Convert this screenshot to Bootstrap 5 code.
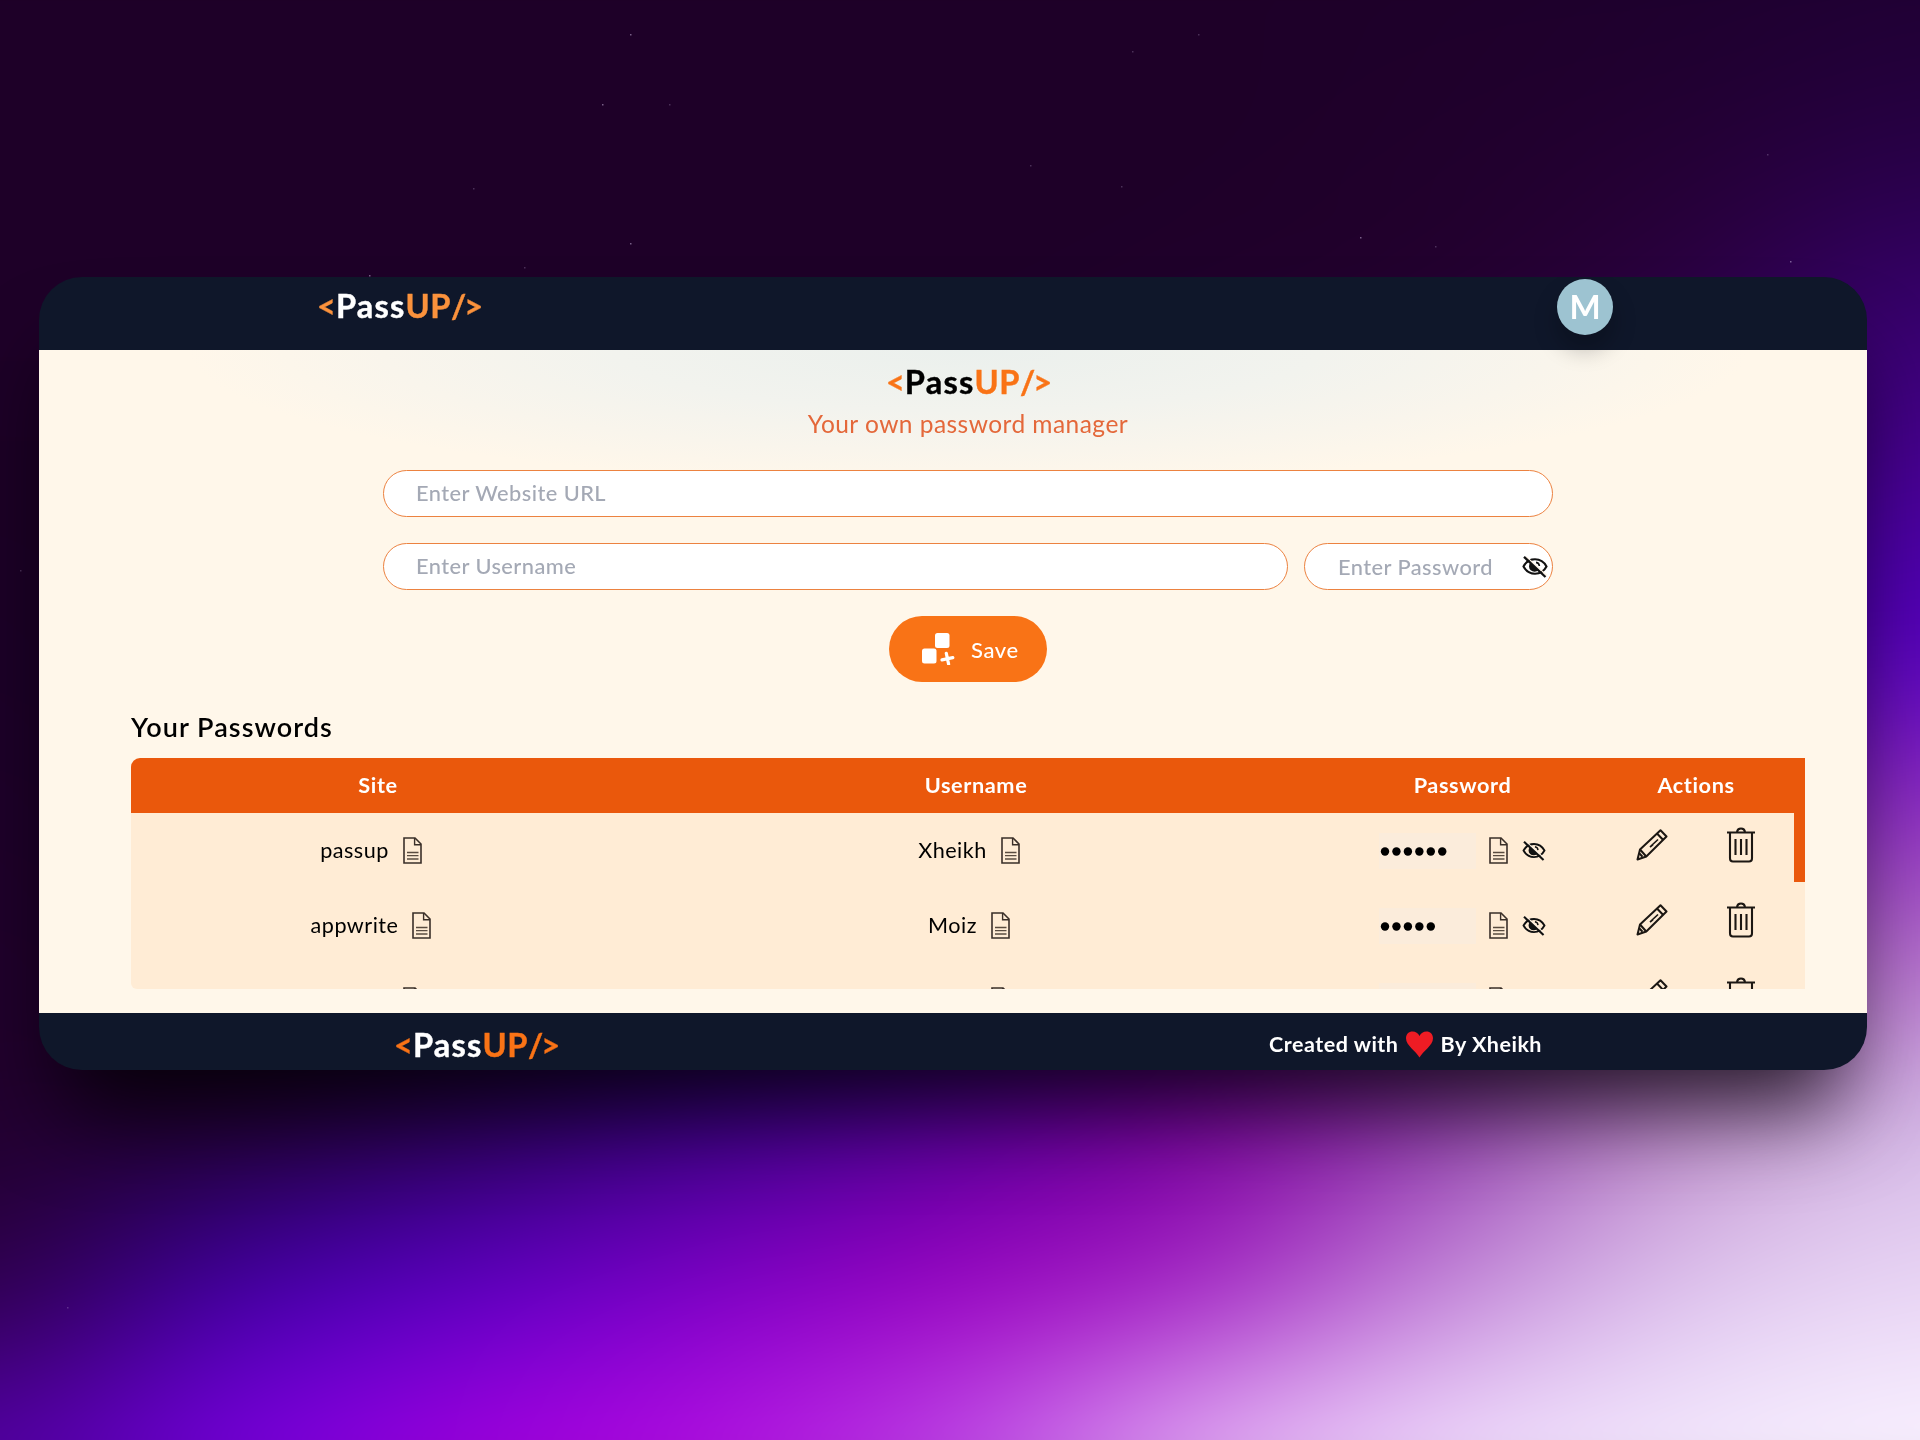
<!DOCTYPE html>
<html lang="en">
<head>
<meta charset="utf-8">
<title>PassUP</title>
<link rel="stylesheet" href="https://cdn.jsdelivr.net/npm/bootstrap@5.3.0/dist/css/bootstrap.min.css">
<style>
body{width:1920px;height:1440px;overflow:hidden;background:#1e0028;font-family:Lato,"Open Sans",sans-serif;color:#000}
#sky{position:absolute;inset:0;width:1920px;height:1440px}
.window{position:relative;width:1828px;height:793px;margin:277px 0 0 39px;border-radius:43px;overflow:hidden}
.halo{position:absolute;left:40px;top:278px;width:1826px;height:791px;border-radius:43px;box-shadow:0 62px 88px -22px rgba(0,0,0,.78)}
.topbar{height:73px;background:#0f172a;padding:2px 254px 0 278px}
.logo{font-weight:700;font-size:32.6px;line-height:54px;white-space:nowrap;-webkit-text-stroke:.4px currentColor}
.logo .lg-a{letter-spacing:1.2px}
.logo .lg-b{letter-spacing:.6px}
.logo .lg-c{letter-spacing:-2px}
.orange{color:#f97316}
.topbar .orange{color:#fb923c}
.avatar{width:56px;height:56px;background:#9dc3d1;font-size:33px;font-weight:700;line-height:1;padding-bottom:2px;box-shadow:0 14px 22px 2px rgba(0,0,0,.22)}
.content{height:663px;background:radial-gradient(ellipse 780px 135px at 929px 0,#ebf0ed 0,#f2f3ee 45%,#f9f5ec 75%,#fff7ea 100%);padding:5px 62px 0 92px}
.tagline{font-size:24.5px;line-height:30px;color:#e4683a;letter-spacing:.46px}
.fields{width:1170px;gap:26px;margin-top:31px}
.field{height:47px;border:1.5px solid #ec8240;border-radius:24px;background:#fff;color:#a4a9b5;font-size:21.8px;padding:0 32px;line-height:43px;font-weight:500;letter-spacing:.45px}
.field-pass{width:249px;padding-left:33px}
.save{width:158px;height:66px;margin-top:26px;background:#f97316;border-radius:33px;color:#fff;font-size:22px;font-weight:500;padding-left:32px;letter-spacing:.6px}
.heading{font-size:27px;font-weight:600;line-height:32px;letter-spacing:1.05px;margin:29px 0 15px}
.vault{width:1674px;height:231px;background:#ffecd5;border-radius:9px 0 0 6px;overflow:hidden;position:relative}
.cols{display:grid;grid-template-columns:494px 702px 271px 196px}
.vhead{background:#ea580c;height:55px;color:#fff;font-size:21.7px;font-weight:700;letter-spacing:.6px;padding-bottom:1px}
.vrow{height:75px;font-size:21.6px;letter-spacing:.5px}
.thumb{position:absolute;right:0;top:55px;width:11px;height:69px;background:#ea580c}
.doc{margin:0 14px}
.doc-pass{margin:0 14px 0 13px}
.secret{width:97px;height:36px;background:#fbecdb;padding-left:1px}
.tools{gap:59px;padding:0 2px 11px 0}
.bottombar{height:57px;background:#0f172a;padding:6px 325px 0 355px}
.credit{color:#fff;font-size:21.5px;font-weight:700;letter-spacing:.5px}
.heart{margin:0 7px 0 8px}
</style>
<script src="https://cdn.jsdelivr.net/npm/bootstrap@5.3.0/dist/js/bootstrap.bundle.min.js"></script>
</head>
<body>
<canvas id="sky" width="1920" height="1440"></canvas>
<div class="halo"></div>

<svg class="d-none">
  <symbol id="i-doc" viewBox="0 0 19 27"><path d="M1 1h11l6 6v19H1z" fill="none" stroke="#3a2f28" stroke-width="1.6"/><path d="M11.6 1v6.8H18" fill="none" stroke="#3a2f28" stroke-width="1.4"/><path d="M4 15.5h11.5M4 18.6h11.5M4 22h11.5" stroke="#5a4c40" stroke-width="1.3"/></symbol>
  <symbol id="i-eye" viewBox="0 0 26 22"><path d="M1.5 10.500C4 5.800 8.200 3.300 13 3.300s9 2.500 11.500 7.200C22 15.200 17.800 17.700 13 17.700S4 15.200 1.500 10.500z" fill="none" stroke="#111" stroke-width="2.1"/><path d="M8.500 6.500a5 5 0 0 0 8 7.500z" fill="#111"/><path d="M14 6.400a4 4 0 0 1 3.400 3.600" fill="none" stroke="#111" stroke-width="1.6"/><path d="M4.200 .6L25 19.500" stroke="#fff3e4" stroke-width="1.2"/><path d="M2 .8l21.500 20.200" stroke="#111" stroke-width="2.300"/></symbol>
  <symbol id="i-pen" viewBox="0 0 32 32"><g fill="none" stroke="#1c1713" stroke-width="2" stroke-linejoin="round"><path d="M1.500 30.500L4 20.500 24.500 1.200l6 6.300L10.300 27.500z"/><path d="M4 20.500l6.300 7M21 4.500l6 6.300"/><path d="M3.500 24.500l3 3.200" /><path d="M15.500 16.500l6.500-6M14 18l3-2.500" stroke-width="1.700"/></g></symbol>
  <symbol id="i-bin" viewBox="0 0 28 36"><g fill="none" stroke="#1c1713" stroke-width="2.1"><path d="M0 5.500h28M3 5.500V31.500q0 3 3 3h16q3 0 3-3V5.500"/><path d="M10 5q.5-3.500 4-3.500T18 5"/><path d="M8.500 12v16M14 12v16M19.500 12v16"/></g></symbol>
</svg>

<div class="window">
  <header class="topbar d-flex justify-content-between align-items-start">
    <div class="logo text-white"><span class="orange">&lt;</span><span class="lg-a">Pass</span><span class="orange lg-b">UP</span><span class="orange lg-c">/&gt;</span></div>
    <div class="avatar rounded-circle d-flex align-items-center justify-content-center text-white">M</div>
  </header>
  <main class="content">
    <div class="text-center">
      <div class="logo"><span class="orange">&lt;</span><span class="lg-a">Pass</span><span class="orange lg-b">UP</span><span class="orange lg-c">/&gt;</span></div>
      <div class="tagline">Your own password manager</div>
    </div>
    <div class="fields mx-auto d-flex flex-column">
      <div class="field">Enter Website URL</div>
      <div class="d-flex gap-3">
        <div class="field flex-grow-1">Enter Username</div>
        <div class="field field-pass d-flex justify-content-between align-items-center pe-1 text-nowrap"><span>Enter Password</span><svg class="flex-shrink-0" width="26" height="22"><use href="#i-eye"/></svg></div>
      </div>
    </div>
    <div class="save d-flex align-items-center mx-auto">
      <svg width="34" height="32" viewBox="0 0 34 32"><g fill="#fff"><rect x="14" y="0" width="14.5" height="15" rx="2.5"/><rect x="1" y="15.5" width="14.5" height="15" rx="2.5"/></g><path d="M21 26.900l10.800-2.300M25.300 20.300l2.300 10.800" stroke="#fff" stroke-width="3.200" stroke-linecap="round"/></svg>
      <span class="ms-3">Save</span>
    </div>
    <div class="heading">Your Passwords</div>
    <div class="vault">
      <div class="vhead cols align-items-center text-center">
        <div>Site</div><div>Username</div><div>Password</div><div>Actions</div>
      </div>
      <div id="rows"></div>
      <div class="thumb"></div>
    </div>
  </main>
  <footer class="bottombar d-flex align-items-center justify-content-between">
    <div class="logo text-white"><span class="orange">&lt;</span><span class="lg-a">Pass</span><span class="orange lg-b">UP</span><span class="orange lg-c">/&gt;</span></div>
    <div class="credit d-flex align-items-center"><span>Created with</span>
      <svg class="heart" width="27" height="27" viewBox="0 0 27 27"><path d="M13.500 26.500C10 20 0 14.500 0 7.200 0 3 2.800.4 6.600.4c3 0 5.500 1.600 6.900 4.600C14.900 2 17.400.4 20.400.4 24.200.4 27 3 27 7.200 27 14.500 17 20 13.500 26.500z" fill="#ee1c24"/></svg>
      <span>By Xheikh</span></div>
  </footer>
</div>
<script>
const entries=[["passup","Xheikh",6],["appwrite","Moiz",5],["passup","Moiz",6]];
const icon=(id,w,h,c="")=>`<svg class="flex-shrink-0 ${c}" width="${w}" height="${h}"><use href="#${id}"/></svg>`;
const cell="d-flex align-items-center justify-content-center";
document.getElementById("rows").innerHTML=entries.map(([site,user,n])=>`<div class="vrow cols">
<div class="${cell}"><span>${site}</span>${icon("i-doc",19,27,"doc")}</div>
<div class="${cell}"><span>${user}</span>${icon("i-doc",19,27,"doc")}</div>
<div class="${cell}"><div class="secret d-flex align-items-center"><svg width="80" height="10">${Array.from({length:n},(_,i)=>`<circle cx="${5+i*11.45}" cy="5.5" r="4.2"/>`).join("")}</svg></div>${icon("i-doc",19,27,"doc-pass")}${icon("i-eye",24,20)}</div>
<div class="tools ${cell}">${icon("i-pen",32,32)}${icon("i-bin",28,36)}</div></div>`).join("");

/* colour mesh of the backdrop: one row every 160px, one column every 240px */
const mesh=[
"1e0028 1e0028 1e0028 1e0028 1e0028 1e0028 1e002a 1e002e 200034",
"1e0028 1e0028 1e0028 1e0028 1e0028 1e0028 20002c 240034 280048",
"1e0028 1e0028 1e0028 1e0028 1e0028 20002c 240030 2c0044 380070",
"1c0026 1c0026 1c0026 1c0026 200030 280040 340060 400080 480094",
"1c0028 1a0024 1a0024 1c0030 240040 300060 400080 4c00a0 5400bc",
"1e002a 1c0026 1c0028 200038 2c0058 3c0080 5000a0 6c14b0 8c2cc0",
"20002c 1e0028 200038 2a0058 3c0080 5c0098 782098 a050b4 b470cc",
"22002e 220036 2c005c 3c0088 58009c 7c04a0 9440b0 c090cc d4b8e6",
"2e004c 4000a0 5a00c0 7c00c4 9804c0 a428c4 c080d6 dcc0ec e8d4f4",
"5000a0 7400d8 9c00dc b010e0 bc44e4 dca0f0 ecd4fa f2e6fc f8f0fe"];
const small=document.createElement("canvas");small.width=9;small.height=10;
const s=small.getContext("2d");
mesh.forEach((r,y)=>r.split(" ").forEach((c,x)=>{s.fillStyle="#"+c;s.fillRect(x,y,1,1)}));
const k=document.getElementById("sky").getContext("2d");
k.imageSmoothingQuality="high";k.filter="blur(40px)";
k.drawImage(small,-120,-80,2160,1600);
k.filter="none";k.fillStyle="rgba(210,190,230,.5)";
[[630,34],[602,104],[630,243],[1360,237],[1790,261],[369,275]].forEach(([x,y])=>k.fillRect(x,y,1.5,1.5));
k.fillStyle="rgba(210,190,230,.25)";
[[669,104],[1132,51],[1121,186],[524,267],[1767,154],[1435,246],[20,570],[67,1307],[473,188],[1198,34],[1030,165]].forEach(([x,y])=>k.fillRect(x,y,1.5,1.5));
</script>
</body>
</html>
